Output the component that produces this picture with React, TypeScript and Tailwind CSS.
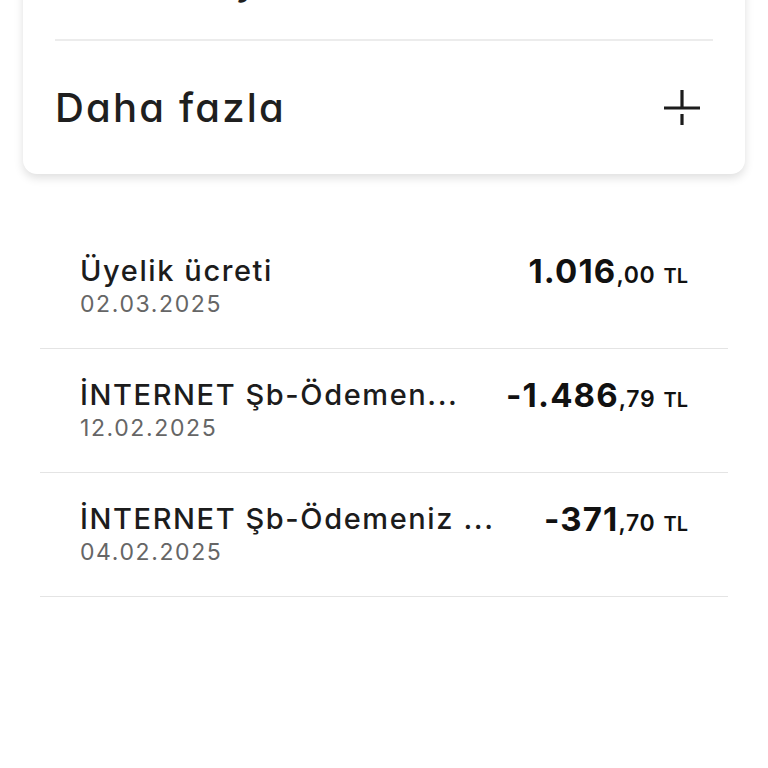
import React from "react";

const font = { fontFamily: "Inter, 'Noto Sans', sans-serif" };

function PlusIcon() {
  return (
    <svg width="36" height="36" viewBox="0 0 36 36" fill="none">
      <line x1="0" y1="18" x2="36" y2="18" stroke="#1c1c1c" strokeWidth="3.2" />
      <line x1="18" y1="0" x2="18" y2="18" stroke="#1c1c1c" strokeWidth="3.2" />
      <line x1="18" y1="24" x2="18" y2="35" stroke="#1c1c1c" strokeWidth="3.2" />
    </svg>
  );
}

type Tx = { title: string; date: string; main: string; cents: string };

const txs: Tx[] = [
  { title: "Üyelik ücreti", date: "02.03.2025", main: "1.016", cents: ",00" },
  { title: "İNTERNET Şb-Ödemen...", date: "12.02.2025", main: "-1.486", cents: ",79" },
  { title: "İNTERNET Şb-Ödemeniz ...", date: "04.02.2025", main: "-371", cents: ",70" },
];

export default function App() {
  return (
    <div
      className="min-h-[768px] w-full overflow-hidden bg-white [font-feature-settings:'cv11']"
      style={font}
    >
      <div className="mx-[23px] -mt-[80px] rounded-[14px] bg-white shadow-[0_4px_10px_rgba(0,0,0,0.13)]">
        <div className="flex h-[119px] items-center px-[32px]">
          <span className="text-[40px] font-medium tracking-[0.06em] text-[#1f1f1f]">
            Kartım ayarları
          </span>
        </div>
        <div className="mx-[32px] h-[2px] bg-[#ececec]" />
        <div className="flex h-[133px] items-center justify-between pl-[32px] pr-[45px]">
          <span className="text-[40px] font-medium leading-none tracking-[0.055em] text-[#1f1f1f]">
            Daha fazla
          </span>
          <PlusIcon />
        </div>
      </div>

      <div className="mx-[40px] mt-[51px] flex flex-col">
        {txs.map((t, i) => (
          <div
            key={i}
            className="flex items-start justify-between gap-[40px] border-b border-[#e4e4e4] px-[40px] pb-[29px] pt-[28px]"
          >
            <div className="flex min-w-0 flex-col">
              <span className="whitespace-nowrap text-[29px] font-medium leading-[36px] tracking-[0.055em] text-[#1c1c1c]">
                {t.title}
              </span>
              <span className="text-[23px] leading-[30px] tracking-[0.07em] text-[#666666]">
                {t.date}
              </span>
            </div>
            <div className="flex shrink-0 items-baseline whitespace-nowrap leading-[36px] text-[#111]">
              <span className="text-[33px] font-bold tracking-[0.035em]">{t.main}</span>
              <span className="text-[23px] font-semibold tracking-[0.03em]">{t.cents}</span>
              <span className="ml-[8px] text-[20px] font-semibold">TL</span>
            </div>
          </div>
        ))}
      </div>
    </div>
  );
}
